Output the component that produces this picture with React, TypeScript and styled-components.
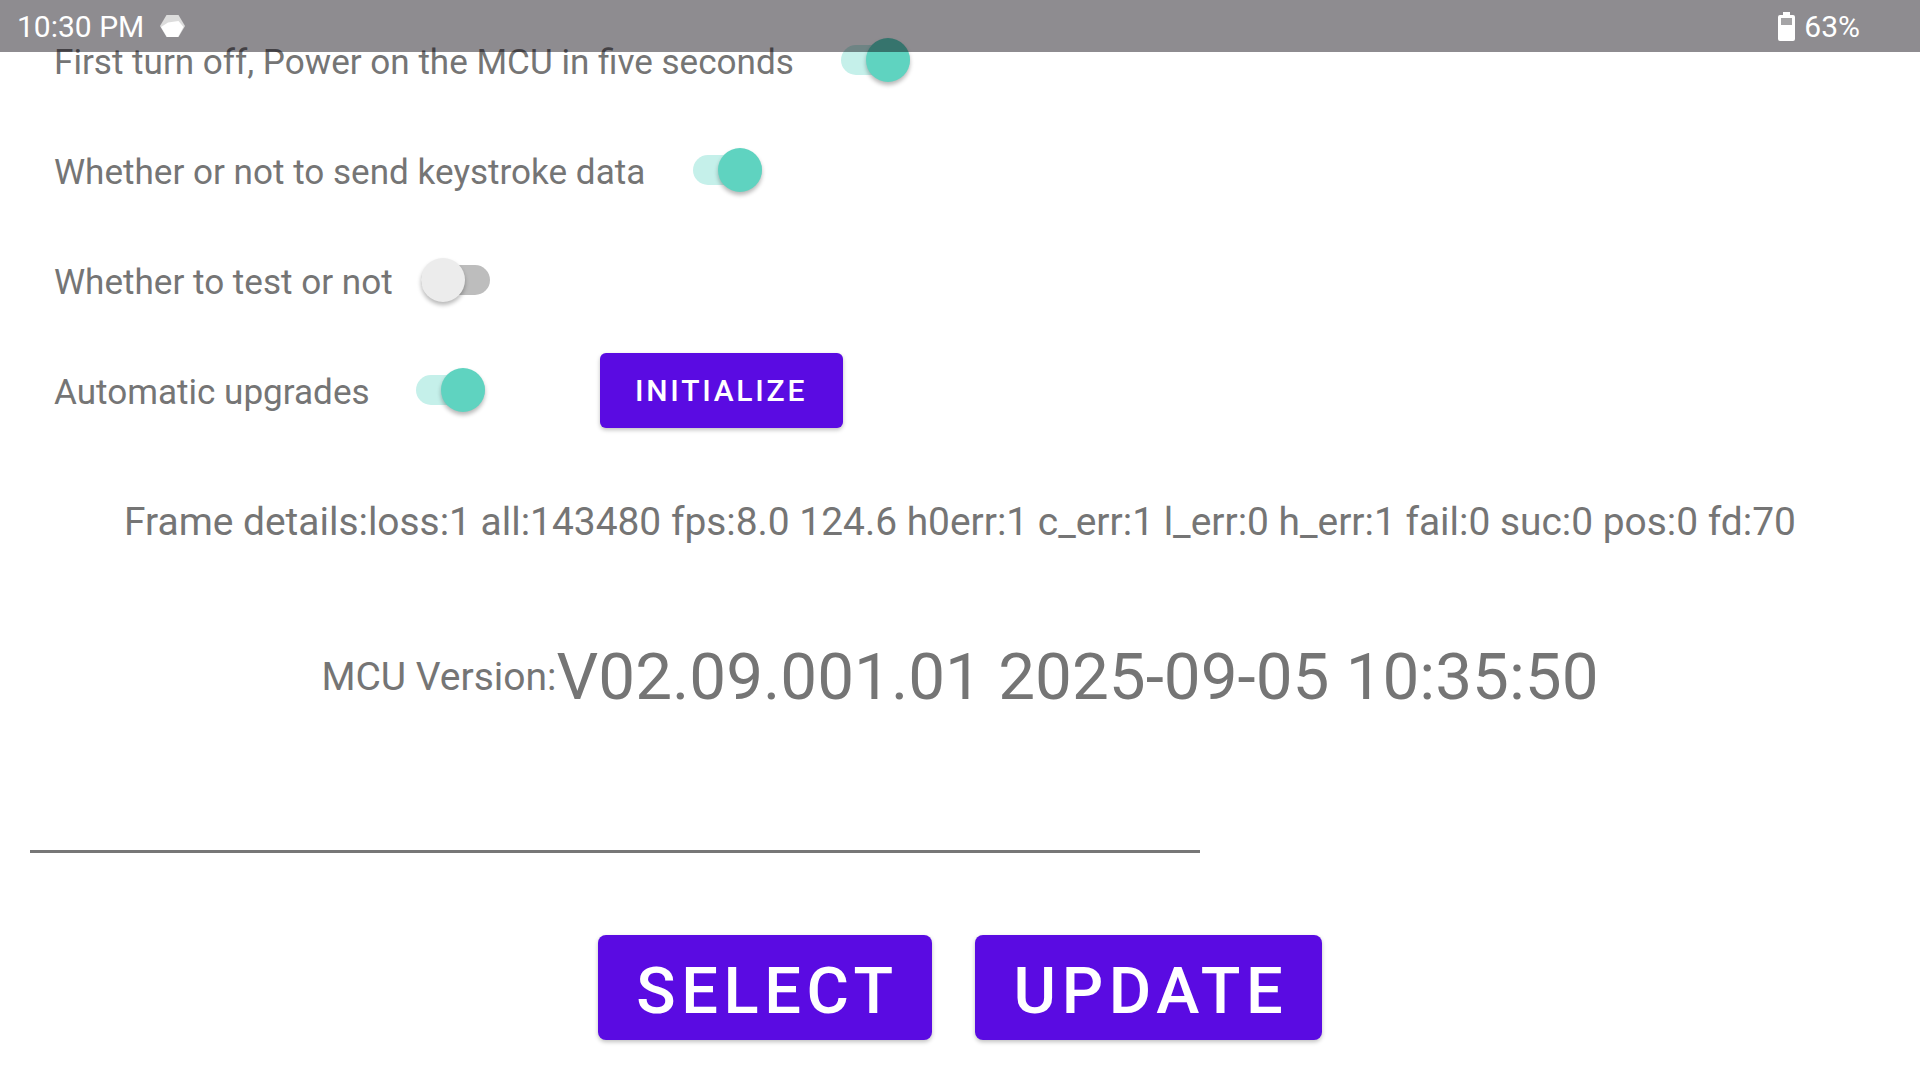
import styled, { createGlobalStyle } from "styled-components";

const GlobalStyle = createGlobalStyle`
  html, body {
    margin: 0;
    background: #fff;
  }
`;

const Screen = styled.div`
  position: relative;
  width: 1920px;
  height: 1080px;
  overflow: hidden;
  background: #fff;
  font-family: Roboto, "Liberation Sans", sans-serif;
  color: #757575;
`;

const StatusBar = styled.div`
  position: absolute;
  inset: 0 0 auto 0;
  height: 52px;
  display: flex;
  align-items: center;
  padding: 0 60px 0 17px;
  background: rgba(4, 0, 8, 0.45);
  color: #fff;
  font-size: 30px;
`;

const StatusGroup = styled.div<{ $gap: number }>`
  display: flex;
  align-items: center;
  gap: ${(p) => p.$gap}px;
`;

const Spacer = styled.div`
  flex: 1;
`;

const Settings = styled.div`
  padding-top: 5px;
`;

const SettingRow = styled.div`
  display: flex;
  align-items: center;
  height: 110px;
  padding-left: 54px;
`;

const Label = styled.span`
  font-size: 35.1px;
  position: relative;
  top: 2px;
`;

const SwitchRoot = styled.div<{ $gap: number }>`
  position: relative;
  width: 69px;
  height: 44px;
  margin-left: ${(p) => p.$gap}px;
`;

const Track = styled.div<{ $on: boolean }>`
  position: absolute;
  left: 0;
  right: 0;
  top: 7px;
  height: 30px;
  border-radius: 15px;
  background: ${(p) => (p.$on ? "#c5f0ea" : "#bdbdbd")};
`;

const Thumb = styled.div<{ $on: boolean }>`
  position: absolute;
  top: 0;
  ${(p) => (p.$on ? "right: 0;" : "left: 0;")}
  width: 44px;
  height: 44px;
  border-radius: 50%;
  background: ${(p) => (p.$on ? "#5fd3c0" : "#ececec")};
  box-shadow: 0 3px 4px rgba(0, 0, 0, 0.28);
`;

const Button = styled.button`
  border: 0;
  margin: 0;
  background: #5a0be2;
  color: #fff;
  font-family: Roboto, "Liberation Sans", sans-serif;
  font-weight: 500;
  box-shadow: 0 2px 4px rgba(0, 0, 0, 0.25);
`;

const SmallButton = styled(Button)`
  width: 243px;
  height: 75px;
  margin-left: 115px;
  border-radius: 6px;
  font-size: 30px;
  letter-spacing: 2.75px;
`;

const FrameDetails = styled.div`
  margin-top: 47px;
  height: 60px;
  line-height: 60px;
  text-align: center;
  font-size: 38.9px;
  white-space: nowrap;
`;

const VersionLine = styled.div`
  margin-top: 85px;
  height: 80px;
  display: flex;
  justify-content: center;
  align-items: center;
  line-height: 80px;
  white-space: nowrap;
`;

const VersionLabel = styled.span`
  font-size: 39px;
`;

const VersionValue = styled.span`
  font-size: 65.6px;
`;

const Divider = styled.div`
  width: 1170px;
  height: 3px;
  margin: 133px 0 0 30px;
  background: #777;
`;

const Actions = styled.div`
  display: flex;
  justify-content: center;
  gap: 43px;
  margin-top: 82px;
  padding-right: 1px;
`;

const LargeButton = styled(Button)<{ $width: number }>`
  width: ${(p) => p.$width}px;
  height: 105px;
  padding: 6px 0 0 6px;
  border-radius: 8px;
  font-size: 65px;
  letter-spacing: 5.6px;
`;

function Switch({ on, gap }: { on: boolean; gap: number }) {
  return (
    <SwitchRoot $gap={gap}>
      <Track $on={on} />
      <Thumb $on={on} />
    </SwitchRoot>
  );
}

function HexIcon() {
  return (
    <svg width="25" height="24" viewBox="0 0 25 24">
      <path d="M0 12 6.5 1h12L25 12l-6.5 11h-12z" fill="#dcdcdc" />
      <path d="M1 13 8 8.5 18.5 7l5 6-5.5 10H7z" fill="#fff" />
    </svg>
  );
}

function BatteryIcon() {
  return (
    <svg width="17" height="29" viewBox="0 0 17 29">
      <path d="M5 0h7v3h3a2 2 0 0 1 2 2v22a2 2 0 0 1-2 2H2a2 2 0 0 1-2-2V5a2 2 0 0 1 2-2h3z" fill="#fff" />
      <rect x="3" y="6" width="11" height="7" fill="#a5a4a6" />
    </svg>
  );
}

export default function App() {
  return (
    <Screen>
      <GlobalStyle />
      <Settings>
        <SettingRow>
          <Label>First turn off, Power on the MCU in five seconds</Label>
          <Switch on gap={47} />
        </SettingRow>
        <SettingRow>
          <Label>Whether or not to send keystroke data</Label>
          <Switch on gap={48} />
        </SettingRow>
        <SettingRow>
          <Label>Whether to test or not</Label>
          <Switch on={false} gap={28} />
        </SettingRow>
        <SettingRow>
          <Label>Automatic upgrades</Label>
          <Switch on gap={46} />
          <SmallButton>INITIALIZE</SmallButton>
        </SettingRow>
      </Settings>
      <FrameDetails>
        Frame details:loss:1 all:143480 fps:8.0 124.6 h0err:1 c_err:1 l_err:0 h_err:1 fail:0 suc:0 pos:0 fd:70
      </FrameDetails>
      <VersionLine>
        <VersionLabel>MCU Version:</VersionLabel>
        <VersionValue>V02.09.001.01 2025-09-05 10:35:50</VersionValue>
      </VersionLine>
      <Divider />
      <Actions>
        <LargeButton $width={334}>SELECT</LargeButton>
        <LargeButton $width={347}>UPDATE</LargeButton>
      </Actions>
      <StatusBar>
        <StatusGroup $gap={16}>
          <span>10:30 PM</span>
          <HexIcon />
        </StatusGroup>
        <Spacer />
        <StatusGroup $gap={9}>
          <BatteryIcon />
          <span>63%</span>
        </StatusGroup>
      </StatusBar>
    </Screen>
  );
}
